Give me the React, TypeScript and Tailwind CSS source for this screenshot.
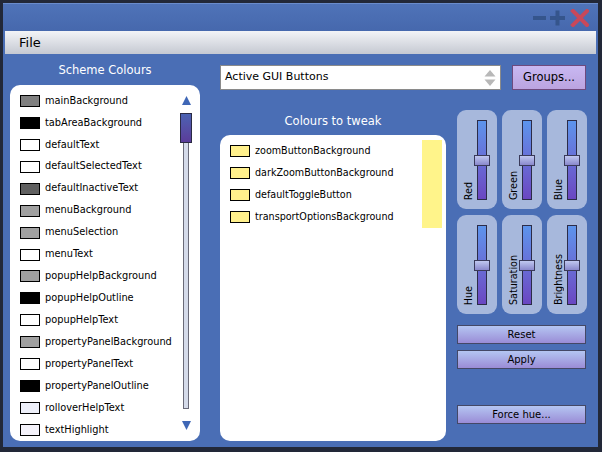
import React from "react";

const FONT = { fontFamily: '"DejaVu Sans", Verdana, sans-serif' };

const scheme: [string, string][] = [
  ["mainBackground", "#808080"],
  ["tabAreaBackground", "#000000"],
  ["defaultText", "#ffffff"],
  ["defaultSelectedText", "#ffffff"],
  ["defaultInactiveText", "#606060"],
  ["menuBackground", "#a0a0a0"],
  ["menuSelection", "#a0a0a0"],
  ["menuText", "#ffffff"],
  ["popupHelpBackground", "#a0a0a0"],
  ["popupHelpOutline", "#000000"],
  ["popupHelpText", "#ffffff"],
  ["propertyPanelBackground", "#a0a0a0"],
  ["propertyPanelText", "#ffffff"],
  ["propertyPanelOutline", "#000000"],
  ["rolloverHelpText", "#eef0fa"],
  ["textHighlight", "#f5f3fb"],
];

const tweak = [
  "zoomButtonBackground",
  "darkZoomButtonBackground",
  "defaultToggleButton",
  "transportOptionsBackground",
];

function Slider({ label }: { label: string }) {
  return (
    <div className="flex h-[99px] w-[40px] flex-row rounded-[9px] bg-[#a7b8dc] pb-[9px] pl-[6px] pt-[10px]">
      <div className="flex w-[12px] items-center self-end justify-center">
        <span className="rotate-180 whitespace-nowrap text-[9.6px] leading-[12px] text-black [writing-mode:vertical-rl]">
          {label}
        </span>
      </div>
      <div className="relative ml-[2px] h-full w-[10px] border border-[#2c2c48] bg-gradient-to-b from-[#5c94ec] to-[#6a46c2]">
        <div className="absolute left-[-4px] top-[34px] h-[11px] w-[16px] border border-[#3a3a5a] bg-gradient-to-b from-[#c0c8f0] to-[#8a88cc]" />
      </div>
    </div>
  );
}

function Btn({ children, className = "" }: { children: React.ReactNode; className?: string }) {
  return (
    <div
      className={
        "flex h-[19px] w-[129px] items-center justify-center border border-[#444866] bg-gradient-to-b from-[#b4c6f2] to-[#9a8cd6] text-[10px] text-black " +
        className
      }
    >
      {children}
    </div>
  );
}

export default function App() {
  return (
    <div className="h-[452px] w-[602px] bg-[#222838] pb-[5px] pl-[3px] pr-[4px] pt-[3px]" style={FONT}>
      <div className="flex h-full w-full flex-col border-t border-[#6a8ccc] bg-[#4a6eb5]">
        {/* title bar */}
        <div className="flex h-[27px] items-center justify-end bg-gradient-to-b from-[#4f73b8] to-[#4668ad] pr-[9px]">
          <svg width="58" height="18" viewBox="0 0 58 18">
            <rect x="2" y="7" width="13" height="4" fill="#35558c" />
            <rect x="19" y="7" width="15" height="4" fill="#35558c" />
            <rect x="24.5" y="1.5" width="4" height="15" fill="#35558c" />
            <path d="M42 2 L56 16 M56 2 L42 16" stroke="#c8485a" strokeWidth="4" strokeLinecap="square" />
          </svg>
        </div>
        {/* menu bar */}
        <div className="mx-[2px] flex h-[23px] items-center bg-gradient-to-b from-[#f3f4f7] to-[#c5c9d2] pl-[14px] text-[13px] text-black">
          File
        </div>
        {/* content */}
        <div className="flex flex-1 flex-row pl-[7px]">
          {/* left column */}
          <div className="flex w-[190px] flex-col">
            <div className="flex h-[31px] items-center justify-center pt-[3px] text-[11.5px] text-white">Scheme Colours</div>
            <div className="flex h-[356px] flex-row rounded-[10px] bg-white">
              <div className="flex flex-1 flex-col pl-[10px] pt-[5px]">
                {scheme.map(([name, c]) => (
                  <div key={name} className="flex h-[22px] items-center">
                    <div className="h-[12px] w-[20px] border border-black" style={{ backgroundColor: c }} />
                    <span className="ml-[5px] text-[9.8px] text-black">{name}</span>
                  </div>
                ))}
              </div>
              <div className="mr-[8px] flex w-[12px] flex-col items-center pb-[11px] pt-[11px]">
                <svg width="9" height="9" viewBox="0 0 9 9">
                  <path d="M4.5 0 L9 9 L0 9 Z" fill="#3f67b6" />
                </svg>
                <div className="mt-[8px] h-[30px] w-[12px] border border-[#2a2a44] bg-gradient-to-b from-[#4a62b2] to-[#5a3c9a]" />
                <div className="w-[6px] flex-1 border-x border-b border-[#6a6a78] bg-[#d5dbea]" />
                <svg className="mt-[12px]" width="9" height="9" viewBox="0 0 9 9">
                  <path d="M0 0 L9 0 L4.5 9 Z" fill="#3f67b6" />
                </svg>
              </div>
            </div>
          </div>
          {/* right part */}
          <div className="ml-[20px] flex w-[367px] flex-col">
            <div className="mt-[11px] flex h-[25px] flex-row">
              <div className="flex w-[281px] items-center justify-between border border-[#8a8a8a] bg-white pl-[4px] pr-[4px]">
                <span className="text-[11px] text-black">Active GUI Buttons</span>
                <svg width="12" height="18" viewBox="0 0 12 18">
                  <path d="M6 1 L11.5 7.5 L0.5 7.5 Z" fill="#b8b8b8" />
                  <path d="M0.5 10.5 L11.5 10.5 L6 17 Z" fill="#b8b8b8" />
                </svg>
              </div>
              <div className="ml-[11px] flex w-[74px] items-center justify-center border border-[#6e4a7e] bg-gradient-to-b from-[#c8b8f2] to-[#bba4e0] text-[11.5px] text-black">
                Groups...
              </div>
            </div>
            <div className="flex flex-row">
              {/* middle */}
              <div className="flex w-[226px] flex-col">
                <div className="flex h-[45px] items-end justify-center pb-[7px] text-[11.5px] leading-[14px] text-white">
                  Colours to tweak
                </div>
                <div className="flex h-[306px] flex-row rounded-[10px] bg-white">
                  <div className="flex flex-1 flex-col pl-[10px] pt-[5px]">
                    {tweak.map((t) => (
                      <div key={t} className="flex h-[22px] items-center">
                        <div className="h-[12px] w-[20px] border border-black bg-[#fff08c]" />
                        <span className="ml-[5px] text-[9.6px] text-black">{t}</span>
                      </div>
                    ))}
                  </div>
                  <div className="mr-[4px] mt-[5px] h-[88px] w-[20px] bg-[#fff48a]" />
                </div>
              </div>
              {/* sliders */}
              <div className="ml-[11px] mt-[20px] flex w-[130px] flex-col">
                <div className="grid grid-cols-[40px_40px_40px] gap-x-[5px] gap-y-[6px]">
                  <Slider label="Red" />
                  <Slider label="Green" />
                  <Slider label="Blue" />
                  <Slider label="Hue" />
                  <Slider label="Saturation" />
                  <Slider label="Brightness" />
                </div>
                <Btn className="mt-[11px]">Reset</Btn>
                <Btn className="mt-[6px]">Apply</Btn>
                <Btn className="mt-[36px]">Force hue...</Btn>
              </div>
            </div>
          </div>
        </div>
      </div>
    </div>
  );
}
